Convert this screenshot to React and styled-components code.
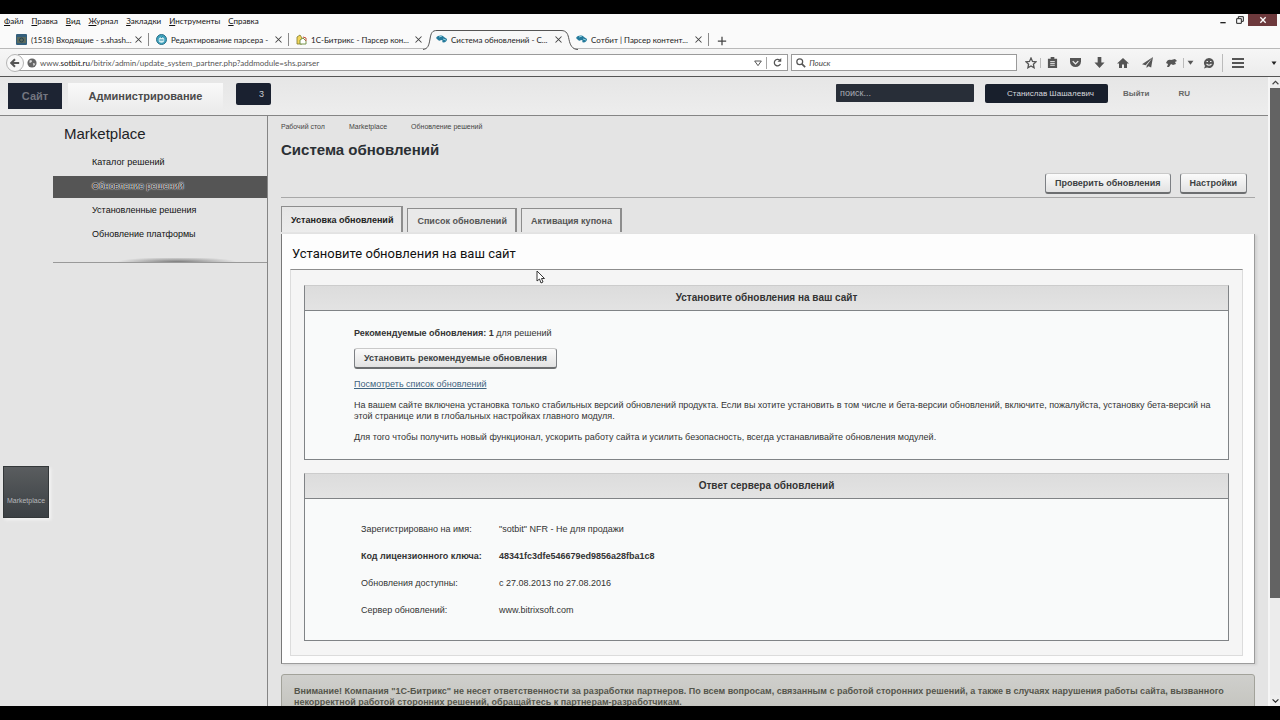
import React from "react";
import styled, { createGlobalStyle, css } from "styled-components";

const GlobalStyle = createGlobalStyle`
  *, *::before, *::after { box-sizing: border-box; }
  html, body { margin: 0; padding: 0; }
  body { background: #000; font-family: "Liberation Sans", Arial, sans-serif; color: #333; overflow: hidden; }
  button, input { font-family: inherit; margin: 0; padding: 0; border: 0; }
  button { cursor: default; }
  a { color: inherit; text-decoration: none; }
`;

const Screen = styled.div`
  height: 100vh;
  padding: 14px 0;
  display: flex;
  flex-direction: column;
  background: #000;
`;

/* ---------- browser window ---------- */

const Chrome = styled.div`
  flex: none;
  background: #fafafa;
  font-family: Lato, "Open Sans", "Noto Sans", sans-serif;
  color: #222;
`;

const MenuBar = styled.div`
  display: flex;
  justify-content: space-between;
  height: 13px;
`;

const MenuList = styled.nav`
  display: flex;
  align-items: center;
  gap: 8px;
  padding-left: 4px;
`;

const MenuItem = styled.button`
  background: none;
  font-size: 8px;
  line-height: 12px;
  color: #111;
  &::first-letter { text-decoration: underline; }
`;

const WindowButtons = styled.div`
  display: flex;
  padding-right: 3px;
`;

const WindowButton = styled.button`
  width: ${(p) => (p.$close ? 29 : 17)}px;
  height: 12px;
  display: flex;
  align-items: center;
  justify-content: center;
  background: ${(p) => (p.$close ? "#6d393c" : "none")};
`;

const TabStrip = styled.div`
  display: flex;
  align-items: flex-end;
  height: 22px;
  padding-left: 9px;
  border-bottom: 1px solid #b9b9b9;
`;

const BrowserTab = styled.div`
  position: relative;
  flex: 0 1 140px;
  min-width: 0;
  height: 19px;
  display: flex;
  align-items: center;
  gap: 4px;
  padding: 0 5px 0 7px;
  margin-bottom: -1px;
  &::after {
    content: "";
    position: absolute;
    right: 0;
    top: 3px;
    width: 1px;
    height: 13px;
    background: ${(p) => (p.$divider ? "#8a8a8a" : "transparent")};
  }
`;

const TabShape = styled.svg`
  position: absolute;
  left: -6px;
  top: 0;
  width: 156px;
  height: 20px;
`;

const TabLabel = styled.button`
  position: relative;
  flex: 1;
  min-width: 0;
  background: none;
  white-space: nowrap;
  text-align: left;
  font-size: 8px;
  line-height: 12px;
  color: #1c1c1c;
`;

const GlyphButton = styled.button`
  position: relative;
  flex: none;
  display: flex;
  align-items: center;
  justify-content: center;
  width: ${(p) => p.$w || 12}px;
  height: 14px;
  background: none;
  color: #4b4b4b;
`;

const Favicon = styled.svg`
  position: relative;
  flex: none;
  width: 11px;
  height: 11px;
`;

const NavBar = styled.div`
  display: flex;
  align-items: center;
  height: 28px;
  padding: 0 2px 0 6px;
  background: linear-gradient(#f6f6f6, #ececec);
  border-bottom: 1px solid #555;
`;

const BackButton = styled.button`
  position: relative;
  flex: none;
  width: 18px;
  height: 18px;
  margin-right: -6px;
  border-radius: 50%;
  border: 1px solid #b5b5b5;
  background: #f8f8f8;
  display: flex;
  align-items: center;
  justify-content: center;
  color: #444;
`;

const AddressBox = styled.div`
  flex: 1 1 771px;
  min-width: 0;
  height: 17px;
  display: flex;
  align-items: center;
  gap: 3px;
  padding-left: 8px;
  background: #fff;
  border: 1px solid #9a9a9a;
`;

const UrlText = styled.div`
  flex: 1;
  min-width: 0;
  font-size: 8px;
  line-height: 12px;
  color: #555;
  white-space: nowrap;
  b { font-weight: 400; color: #111; }
`;

const Reload = styled.span`
  display: flex;
  align-items: center;
  height: 12px;
  border-left: 1px solid #a5a5a5;
  padding: 0 3px;
`;

const BrowserSearch = styled.label`
  flex: 0 1 226px;
  height: 17px;
  margin: 0 5px 0 3px;
  display: flex;
  align-items: center;
  gap: 3px;
  padding-left: 4px;
  background: #fff;
  border: 1px solid #9a9a9a;
`;

const BrowserSearchInput = styled.input`
  flex: 1;
  min-width: 0;
  background: none;
  outline: none;
  font-size: 8px;
  font-style: italic;
  line-height: 12px;
  &::placeholder { color: #444; opacity: 1; }
`;

const ToolGroup = styled.div`
  flex: none;
  display: flex;
  align-items: center;
  width: 256px;
`;

const ToolEnd = styled.div`
  margin-left: auto;
`;

const ToolDivider = styled.span`
  width: 1px;
  height: ${(p) => p.$h || 10}px;
  background: #bbb;
`;

/* ---------- admin page ---------- */

const Viewport = styled.div`
  flex: 1;
  min-height: 0;
  display: flex;
  background: #e4e4e4;
`;

const Page = styled.div`
  flex: 1;
  min-width: 0;
  display: flex;
  flex-direction: column;
  overflow: hidden;
`;

const ScrollBar = styled.div`
  flex: none;
  width: 12px;
  display: flex;
  flex-direction: column;
  background: #ececec;
  border-left: 2px solid #f6f6f6;
`;

const ScrollArrow = styled.button`
  flex: none;
  height: 11px;
  display: flex;
  align-items: center;
  justify-content: center;
  background: #eee;
`;

const ScrollTrack = styled.div`
  flex: 1;
  display: flex;
`;

const ScrollThumb = styled.div`
  width: 100%;
  height: 84%;
  background: #636363;
`;

const Header = styled.header`
  flex: none;
  display: flex;
  align-items: flex-start;
  height: 39px;
  padding: 6px 78px 0 8px;
  background: linear-gradient(#e6e6e6, #ededed);
  border-bottom: 1px solid #858585;
`;

const HeaderTab = styled.button`
  height: 26px;
  font-size: 11px;
  font-weight: 700;
  ${(p) =>
    p.$active
      ? css`
          width: 155px;
          margin-left: 6px;
          color: #4a4a4a;
          background: linear-gradient(#f9f9f9, #ececec);
        `
      : css`
          width: 54px;
          color: #747680;
          background: #1d2433;
        `}
`;

const Counter = styled.button`
  width: 35px;
  height: 22px;
  margin-left: 13px;
  padding-left: 16px;
  border-radius: 2px;
  background: #1a2130;
  color: #c9ccd2;
  font-size: 9px;
`;

const HeaderRight = styled.div`
  margin-left: auto;
  display: flex;
  align-items: center;
  height: 20px;
`;

const SiteSearch = styled.input`
  width: 138px;
  height: 18px;
  padding: 0 4px;
  border-radius: 1px;
  background: #282e38;
  color: #ccc;
  font-size: 9px;
  &::placeholder { color: #a9adb3; opacity: 1; }
`;

const UserButton = styled.button`
  width: 123px;
  height: 19px;
  margin: 0 15px 0 11px;
  padding-left: 8px;
  border-radius: 2px;
  background: #181f2c;
  color: #d6d8dc;
  font-size: 8px;
`;

const HeaderLink = styled.a`
  font-size: 8px;
  font-weight: 700;
  color: #666;
  margin-right: ${(p) => p.$gap || 0}px;
`;

const Body = styled.div`
  flex: 1;
  min-height: 0;
  display: flex;
`;

const Rail = styled.div`
  flex: none;
  width: 53px;
  padding: 350px 0 0 3px;
`;

const RailButton = styled.button`
  display: block;
  width: 46px;
  height: 52px;
  padding: 16px 0 0;
  border: 1px solid #333739;
  background: linear-gradient(#5a5d5f, #3b4044);
  box-shadow: 2px 2px 3px #f4f4f4;
  color: #b5b8ba;
  font-size: 7px;
  text-align: center;
`;

const Sidebar = styled.aside`
  flex: none;
  width: 215px;
  border-right: 1px solid #858585;
`;

const SideTitle = styled.h2`
  margin: 0;
  padding: 8px 0 6px 11px;
  font-size: 15px;
  line-height: 20px;
  font-weight: 400;
  color: #1d2226;
`;

const SideLink = styled.a`
  display: block;
  height: 22px;
  margin: 2px 0;
  padding-left: 39px;
  font-size: 9px;
  line-height: 20px;
  color: #111;
  ${(p) =>
    p.$active &&
    css`
      background: #555;
      color: #222;
      text-shadow: 0 0 1px #fff, 0 0 1px #fff, 0 0 2px #ddd;
    `}
`;

const SideRule = styled.div`
  height: 5px;
  margin-top: 12px;
  border-bottom: 1px solid #999;
  background: radial-gradient(ellipse 60px 5px at 58% 100%, #7a7a7a, transparent);
`;

const Main = styled.main`
  flex: 1;
  min-width: 0;
  padding: 5px 13px 0;
`;

const Crumbs = styled.nav`
  display: flex;
  gap: 24px;
  font-size: 7px;
  line-height: 12px;
  color: #444;
`;

const PageTitle = styled.h1`
  margin: 7px 0 0;
  font-size: 15px;
  line-height: 20px;
  font-weight: 700;
  color: #2b3034;
`;

const Actions = styled.div`
  display: flex;
  justify-content: flex-end;
  gap: 9px;
  margin-top: 13px;
  padding: 0 8px 3px 0;
  border-bottom: 1px solid #a8a8a8;
`;

const Button = styled.button`
  height: 21px;
  padding: 0 9px;
  border: 1px solid #7d8084;
  border-top-color: #c9c9c9;
  border-bottom: 2px solid #6c6e70;
  border-radius: 3px;
  background: linear-gradient(#fbfbfb, #e2e2e2);
  font-size: 9px;
  font-weight: 700;
  line-height: 18px;
  color: #3c3f42;
  white-space: nowrap;
`;

const Tabs = styled.div`
  display: flex;
  align-items: flex-end;
  gap: 4px;
  margin-top: 8px;
`;

const Tab = styled.button`
  height: ${(p) => (p.$active ? 26 : 24)}px;
  padding: 0 8px 0 9px;
  border: 1px solid #8d8d8d;
  border-right: 2px solid #8d8d8d;
  border-bottom: 0;
  background: ${(p) => (p.$active ? "linear-gradient(#e6e6e6, #ececec)" : "#e9e9e9")};
  font-size: 9px;
  font-weight: 700;
  color: ${(p) => (p.$active ? "#222" : "#555")};
  white-space: nowrap;
`;

const Panel = styled.section`
  margin-top: 2px;
  padding: 10px 11px 7px 8px;
  background: #fdfdfd;
  border: 1px solid #9c9c9c;
  border-top: 0;
  border-left-color: #777;
  box-shadow: 2px 1px 2px #d0d0d0;
`;

const PanelTitle = styled.h2`
  margin: 0 0 5px;
  padding-left: 2px;
  font-family: Roboto, "Liberation Sans", sans-serif;
  font-size: 13px;
  line-height: 20px;
  font-weight: 400;
  color: #111;
`;

const PanelBody = styled.div`
  padding: 15px 13px 14px;
  border: 1px solid #dcdcdc;
  border-top-color: #8d8d8d;
  background: #f5f5f5;
`;

const Card = styled.section`
  border: 1px solid #808386;
  border-top-color: #ccc;
  background: #f9fafa;
  & + & { margin-top: 13px; }
`;

const CardTitle = styled.h3`
  margin: 0;
  font-size: 10px;
  line-height: 24px;
  font-weight: 700;
  text-align: center;
  color: #333;
  background: linear-gradient(#dcdcdc, #e3e3e3);
  border-bottom: 1px solid #808386;
`;

const UpdateInfo = styled.div`
  padding: 17px 12px 16px 49px;
  font-size: 9px;
  line-height: 11px;
  p { margin: 0 0 10px; }
  p:last-child { margin: 0; }
`;

const InstallRow = styled.div`
  margin: -1px 0 10px;
`;

const TextLink = styled.a`
  color: #3f6480;
  text-decoration: underline;
`;

const InfoTable = styled.table`
  margin: 17px 0 16px 54px;
  border-collapse: collapse;
  font-size: 9px;
  line-height: 11px;
`;

const InfoRow = styled.tr`
  font-weight: ${(p) => (p.$strong ? 700 : 400)};
  th, td { font-weight: inherit; text-align: left; height: 27px; padding: 0 2px; }
  th { width: 138px; }
`;

const Notice = styled.p`
  margin: 10px 0 0;
  padding: 11px 12px;
  height: 60px;
  border: 1px solid #a2a29a;
  border-radius: 3px 3px 0 0;
  background: linear-gradient(#cfcfcc, #bdbdb6);
  font-size: 9px;
  line-height: 11px;
  font-weight: 700;
  color: #55564c;
`;

const Pointer = styled.svg`
  position: absolute;
  left: 536px;
  top: 270px;
  width: 9px;
  height: 14px;
`;

/* ---------- drawings ---------- */

const Ico = ({ children, s = 12 }) => (
  <svg width={s} height={s} viewBox="0 0 12 12" fill="none" stroke="none" aria-hidden="true">
    {children}
  </svg>
);

const CloseMark = () => (
  <Ico s={9}><path d="M2 2l8 8M10 2l-8 8" stroke="#444" strokeWidth="1.4" /></Ico>
);

const favicons = {
  mail: (
    <>
      <rect width="11" height="11" rx="1" fill="#35607d" />
      <rect x="1" y="3" width="9" height="6" fill="#5b6b5e" />
      <circle cx="5.5" cy="6" r="2" fill="none" stroke="#27404f" />
    </>
  ),
  globe: (
    <>
      <circle cx="5.5" cy="5.5" r="5" fill="#3fa2bd" stroke="#2a6f88" />
      <circle cx="5.5" cy="6" r="2.8" fill="#d7eef2" />
      <path d="M3.5 6h4M5 4l2-2" stroke="#2a8aa8" />
    </>
  ),
  bitrix: (
    <>
      <path d="M1 3l3-2 2 3v6H1z" fill="#f3d55b" stroke="#7d7a2c" strokeWidth=".8" />
      <path d="M4 10V6l3-2 3 3v3z" fill="#fff" stroke="#6a8a3a" strokeWidth=".9" />
      <path d="M7 3l3 1v3" stroke="#c1503a" fill="none" />
    </>
  ),
  fish: (
    <>
      <path d="M0 4c2-3 6-3 8-1l3 2c0 3-3 4-5 3 1-1 1-2-1-2-1 1-2 1-3 0z" fill="#257a9b" />
      <path d="M3 3l3-1M7 5l3 1" stroke="#8fd0e0" />
    </>
  ),
};

const Fav = ({ kind }) => (
  <Favicon viewBox="0 0 11 11" aria-hidden="true">{favicons[kind]}</Favicon>
);

const tabs = [
  { label: "(1518) Входящие - s.shash...", icon: "mail", divider: true },
  { label: "Редактирование парсера -", icon: "globe", divider: true },
  { label: "1С-Битрикс - Парсер кон...", icon: "bitrix" },
  { label: "Система обновлений - С...", icon: "fish", active: true },
  { label: "Сотбит | Парсер контент...", icon: "fish", divider: true },
];

const menu = ["Файл", "Правка", "Вид", "Журнал", "Закладки", "Инструменты", "Справка"];

const sideLinks = ["Каталог решений", "Обновление решений", "Установленные решения", "Обновление платформы"];

const licence = [
  ["Зарегистрировано на имя:", '"sotbit" NFR - Не для продажи'],
  ["Код лицензионного ключа:", "48341fc3dfe546679ed9856a28fba1c8", true],
  ["Обновления доступны:", "с 27.08.2013 по 27.08.2016"],
  ["Сервер обновлений:", "www.bitrixsoft.com"],
];

const G = "#555";

function BrowserChrome() {
  return (
    <Chrome>
      <MenuBar>
        <MenuList>{menu.map((m) => <MenuItem key={m}>{m}</MenuItem>)}</MenuList>
        <WindowButtons>
          <WindowButton aria-label="Свернуть"><Ico s={8}><path d="M2 9h8v2H2z" fill="#222" /></Ico></WindowButton>
          <WindowButton aria-label="Развернуть">
            <Ico s={8}><path d="M1 4h7v7H1zM3.500 3.500V1H11v7H8.500" stroke="#222" strokeWidth="1.500" /></Ico>
          </WindowButton>
          <WindowButton $close aria-label="Закрыть">
            <Ico s={8}><path d="M2 2l8 8M10 2l-8 8" stroke="#fff" strokeWidth="2" /></Ico>
          </WindowButton>
        </WindowButtons>
      </MenuBar>
      <TabStrip>
        {tabs.map((t) => (
          <BrowserTab key={t.label} $divider={t.divider}>
            {t.active && (
              <TabShape viewBox="0 0 156 20" aria-hidden="true">
                <path d="M0 19.500C5 19 6 15 7 9S9 .5 14 .5H138c6 0 7 4 8 9s3 10 9 10" fill="#f8f8f8" stroke="#555" />
              </TabShape>
            )}
            <Fav kind={t.icon} />
            <TabLabel>{t.label}</TabLabel>
            <GlyphButton aria-label="Закрыть вкладку"><CloseMark /></GlyphButton>
          </BrowserTab>
        ))}
        <GlyphButton $w={25} aria-label="Новая вкладка">
          <Ico s={10}><path d="M6 1v10M1 6h10" stroke="#444" strokeWidth="1.500" /></Ico>
        </GlyphButton>
      </TabStrip>
      <NavBar>
        <BackButton aria-label="Назад">
          <Ico s={10}><path d="M11 6H2M6 1.500L1.500 6 6 10.500" stroke="#555" strokeWidth="2.400" /></Ico>
        </BackButton>
        <AddressBox>
          <Ico s={10}>
            <circle cx="6" cy="6" r="5.500" fill="#666" />
            <path d="M3 3c2-1 3 0 3 1S4 6 3 6zM7 6l3 1-2 3zM8 2l2 2" fill="#ddd" />
          </Ico>
          <UrlText>www.<b>sotbit.ru</b>/bitrix/admin/update_system_partner.php?addmodule=shs.parser</UrlText>
          <GlyphButton $w={10} aria-label="Показать журнал"><Ico s={8}><path d="M1 3h10L6 10z" stroke="#555" strokeWidth="1.500" /></Ico></GlyphButton>
          <Reload>
            <GlyphButton $w={14} aria-label="Обновить">
              <Ico s={9}><path d="M10 8a4.300 4.300 0 1 1-1-5" stroke={G} strokeWidth="1.700" /><path d="M11 0v5H6z" fill={G} /></Ico>
            </GlyphButton>
          </Reload>
        </AddressBox>
        <BrowserSearch>
          <Ico s={10}><circle cx="4.500" cy="4.500" r="3.500" stroke={G} strokeWidth="1.500" /><path d="M7 7l4 4" stroke={G} strokeWidth="2" /></Ico>
          <BrowserSearchInput placeholder="Поиск" aria-label="Поиск" />
        </BrowserSearch>
        <ToolGroup>
          <GlyphButton $w={18} aria-label="Закладка"><Ico><path d="M6 1l1.500 3.400 3.500.4-2.600 2.400.7 3.600L6 9l-3.100 1.800.7-3.600L1 4.800l3.500-.4z" stroke={G} strokeWidth="1.300" /></Ico></GlyphButton>
          <ToolDivider />
          <GlyphButton $w={22} aria-label="Список закладок"><Ico s={11}><path d="M1 2h3V0h4v2h3v10H1z" fill={G} /><path d="M3.500 5h5M3.500 7h5M3.500 9h5" stroke="#eee" /></Ico></GlyphButton>
          <GlyphButton $w={24} aria-label="Pocket"><Ico s={11}><path d="M0 1h12v4a6 6 0 0 1-12 0z" fill={G} /><path d="M3 4.500l3 3 3-3" stroke="#eee" strokeWidth="1.500" /></Ico></GlyphButton>
          <GlyphButton $w={24} aria-label="Загрузки"><Ico s={11}><path d="M4 0h4v6h3.500L6 12 .5 6H4z" fill={G} /></Ico></GlyphButton>
          <GlyphButton $w={24} aria-label="Домой"><Ico><path d="M6 1l6 5.500h-2V11H7V7.500H5V11H2V6.500H0z" fill={G} /></Ico></GlyphButton>
          <GlyphButton $w={24} aria-label="Отправить"><Ico s={11}><path d="M12 0L0 8l4 1zM12 0L5 9.500V12l2-2 3 1.500z" fill={G} /></Ico></GlyphButton>
          <GlyphButton $w={24} aria-label="Дополнение"><Ico><path d="M1 6c1-3 3-4 5-3l4-1 2 2-2 1 1 2-3 1-2-1-2 3H2l1-3z" fill={G} /></Ico></GlyphButton>
          <ToolDivider />
          <GlyphButton aria-label="Меню дополнения"><Ico s={7}><path d="M1 3h10L6 10z" fill={G} /></Ico></GlyphButton>
          <GlyphButton $w={26} aria-label="Чат"><Ico><path d="M6 1a5 5 0 1 1-2 9.600L1 11.500 2 9A5 5 0 0 1 6 1z" fill={G} /><path d="M3.500 4.500h1.500M7 4.500h1.500M3.500 7q2.500 2.500 5 0" stroke="#eee" strokeWidth="1.100" /></Ico></GlyphButton>
          <ToolDivider $h={18} />
          <GlyphButton $w={30} aria-label="Меню"><Ico><path d="M0 2h12M0 6h12M0 10h12" stroke={G} strokeWidth="1.800" /></Ico></GlyphButton>
          <ToolEnd>
            <GlyphButton $w={8} aria-label="Ещё"><Ico s={6}><path d="M1 3h10L6 10z" fill="#222" /></Ico></GlyphButton>
          </ToolEnd>
        </ToolGroup>
      </NavBar>
    </Chrome>
  );
}

export default function App() {
  return (
    <Screen>
      <GlobalStyle />
      <BrowserChrome />
      <Viewport>
        <Page>
          <Header>
            <HeaderTab>Сайт</HeaderTab>
            <HeaderTab $active>Администрирование</HeaderTab>
            <Counter>3</Counter>
            <HeaderRight>
              <SiteSearch placeholder="поиск..." aria-label="поиск" />
              <UserButton>Станислав Шашалевич</UserButton>
              <HeaderLink href="#" $gap={29}>Выйти</HeaderLink>
              <HeaderLink href="#">RU</HeaderLink>
            </HeaderRight>
          </Header>
          <Body>
            <Rail><RailButton>Marketplace</RailButton></Rail>
            <Sidebar>
              <SideTitle>Marketplace</SideTitle>
              {sideLinks.map((l, i) => <SideLink key={l} href="#" $active={i === 1}>{l}</SideLink>)}
              <SideRule />
            </Sidebar>
            <Main>
              <Crumbs>
                <a href="#">Рабочий стол</a>
                <a href="#">Marketplace</a>
                <a href="#">Обновление решений</a>
              </Crumbs>
              <PageTitle>Система обновлений</PageTitle>
              <Actions>
                <Button>Проверить обновления</Button>
                <Button>Настройки</Button>
              </Actions>
              <Tabs role="tablist">
                <Tab role="tab" aria-selected="true" $active>Установка обновлений</Tab>
                <Tab role="tab">Список обновлений</Tab>
                <Tab role="tab">Активация купона</Tab>
              </Tabs>
              <Panel>
                <PanelTitle>Установите обновления на ваш сайт</PanelTitle>
                <PanelBody>
                  <Card>
                    <CardTitle>Установите обновления на ваш сайт</CardTitle>
                    <UpdateInfo>
                      <p><b>Рекомендуемые обновления: 1</b> для решений</p>
                      <InstallRow><Button>Установить рекомендуемые обновления</Button></InstallRow>
                      <p><TextLink href="#">Посмотреть список обновлений</TextLink></p>
                      <p>На вашем сайте включена установка только стабильных версий обновлений продукта. Если вы хотите установить в том числе и бета-версии обновлений, включите, пожалуйста, установку бета-версий на этой странице или в глобальных настройках главного модуля.</p>
                      <p>Для того чтобы получить новый функционал, ускорить работу сайта и усилить безопасность, всегда устанавливайте обновления модулей.</p>
                    </UpdateInfo>
                  </Card>
                  <Card>
                    <CardTitle>Ответ сервера обновлений</CardTitle>
                    <InfoTable>
                      <tbody>
                        {licence.map(([k, v, strong]) => (
                          <InfoRow key={k} $strong={strong}><th scope="row">{k}</th><td>{v}</td></InfoRow>
                        ))}
                      </tbody>
                    </InfoTable>
                  </Card>
                </PanelBody>
              </Panel>
              <Notice>Внимание! Компания "1С-Битрикс" не несет ответственности за разработки партнеров. По всем вопросам, связанным с работой сторонних решений, а также в случаях нарушения работы сайта, вызванного некорректной работой сторонних решений, обращайтесь к партнерам-разработчикам.</Notice>
            </Main>
          </Body>
        </Page>
        <ScrollBar>
          <ScrollArrow aria-label="Вверх"><Ico s={7}><path d="M1 9l5-5 5 5" stroke="#444" strokeWidth="2" /></Ico></ScrollArrow>
          <ScrollTrack><ScrollThumb /></ScrollTrack>
          <ScrollArrow aria-label="Вниз"><Ico s={7}><path d="M1 4l5 5 5-5" stroke="#222" strokeWidth="2" /></Ico></ScrollArrow>
        </ScrollBar>
      </Viewport>
      <Pointer viewBox="0 0 9 14" aria-hidden="true">
        <path d="M1 1v10l2.500-2 1.500 4 2-1-1.500-3.500H8.500z" fill="#fff" stroke="#222" strokeWidth=".9" />
      </Pointer>
    </Screen>
  );
}
